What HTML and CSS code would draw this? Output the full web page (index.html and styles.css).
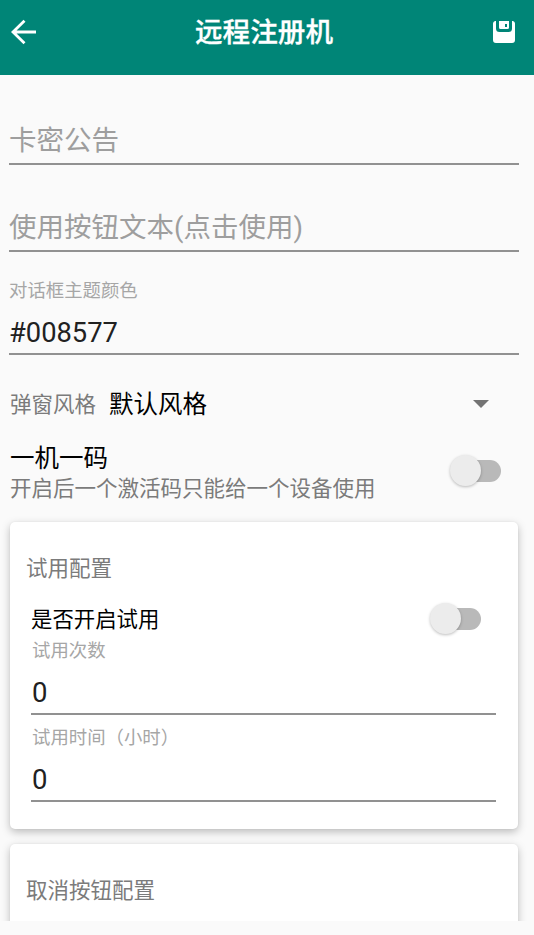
FILE: index.html
```html
<!DOCTYPE html>
<html lang="zh-CN">
<head>
<meta charset="utf-8">
<title>远程注册机</title>
<link rel="stylesheet" href="styles.css">
</head>
<body>
<header class="app-bar">
  <svg class="back" viewBox="0 0 26 26"><path d="M25 13H2M13.5 1.8L2 13L13.5 24.2" fill="none" stroke="#fff" stroke-width="2.8"/></svg>
  <h1 class="title">远程注册机</h1>
  <svg class="save" viewBox="0 0 22 22"><path fill="#fff" d="M2 0H3V7.500Q3 11 6.500 11H15.500Q19 11 19 7.500V0H20Q22 .5 22 2.500V19Q22 22 19 22H3Q0 22 0 19V2.500Q0 .5 2 0Z"/><path fill="#fff" fill-rule="evenodd" d="M6 0H16V6.500Q16 8 14.500 8H7.500Q6 8 6 6.500ZM12 3V6H14V3Z"/></svg>
</header>
<main class="content">
  <div class="field"><div class="value hint">卡密公告</div></div>
  <div class="field"><div class="value hint">使用按钮文本(点击使用)</div></div>
  <div class="field labeled"><div class="label">对话框主题颜色</div><div class="value">#008577</div></div>
  <div class="spinner"><span class="caption">弹窗风格</span><span class="choice">默认风格</span><i class="caret"></i></div>
  <div class="setting">
    <div><div class="choice">一机一码</div><div class="caption">开启后一个激活码只能给一个设备使用</div></div>
    <div class="switch"><i class="thumb"></i></div>
  </div>
  <section class="card">
    <h2 class="caption">试用配置</h2>
    <div class="card-body">
      <div class="toggle"><span>是否开启试用</span><div class="switch"><i class="thumb"></i></div></div>
      <div class="field compact"><div class="label">试用次数</div><div class="value">0</div></div>
      <div class="field compact"><div class="label">试用时间（小时）</div><div class="value">0</div></div>
    </div>
  </section>
  <section class="card">
    <h2 class="caption">取消按钮配置</h2>
  </section>
</main>
</body>
</html>
```
FILE: styles.css
```css
* { box-sizing: border-box; }
body {
  margin: 0;
  height: 935px;
  overflow: hidden;
  background: #fafafa;
  color: #000;
  font-family: Roboto, "Noto Sans CJK SC", sans-serif;
}
h1, h2 { margin: 0; font-weight: 400; }
.app-bar {
  display: flex;
  align-items: center;
  justify-content: space-between;
  height: 75px;
  padding: 0 19px 11px 11px;
  background: #008577;
}
.back { width: 26px; height: 26px; }
.save { width: 22px; height: 22px; }
.title {
  padding: 2px 2px 0 0;
  color: #fff;
  font-size: 27.6px;
  font-weight: 500;
  line-height: 40px;
  -webkit-text-stroke: .3px #fff;
}
.content {
  height: 846px;
  padding-top: 3px;
  overflow: hidden;
}
.field {
  margin: 0 15px 0 9px;
  padding-top: 43px;
  border-bottom: 2px solid #919191;
}
.value {
  height: 42px;
  color: #212121;
  font-size: 27.5px;
  line-height: 40px;
}
.value.hint { color: #9e9e9e; }
.label {
  color: #a6a6a6;
  font-size: 18.4px;
  line-height: 22px;
}
.labeled { padding-top: 28px; }
.labeled .value { height: 40px; margin-top: 11px; font-size: 27.3px; }
.caption {
  color: #7b7b7b;
  font-size: 21.5px;
  line-height: 28px;
}
.choice { font-size: 24.5px; line-height: 32px; }
.spinner {
  display: flex;
  align-items: center;
  height: 50px;
  margin: 24px 45px 0 10px;
}
.spinner span { padding-top: 2px; }
.spinner .choice { margin-left: 13px; }
.caret {
  margin-left: auto;
  border: 8px solid transparent;
  border-top-color: #737373;
  border-bottom: 0;
}
.setting {
  display: flex;
  align-items: center;
  justify-content: space-between;
  height: 60px;
  margin: 13px 33px 0 10px;
}
.setting > :first-child { padding-top: 2px; }
.setting .switch { margin-bottom: 2px; }
.switch {
  position: relative;
  width: 52px;
  height: 22px;
  padding-left: 16px;
}
.switch::before {
  content: "";
  display: block;
  height: 22px;
  border-radius: 11px;
  background: #b9b9b9;
}
.thumb {
  position: absolute;
  left: 1px;
  top: -5px;
  width: 31px;
  height: 31px;
  border-radius: 50%;
  background: #ececec;
  box-shadow: 0 1px 3px rgba(0, 0, 0, .26);
}
.card {
  height: 307px;
  margin: 20px 16px 0 10px;
  padding: 33px 22px 0 16px;
  border-radius: 5px;
  background: #fff;
  box-shadow: 0 3px 8px rgba(0, 0, 0, .25), 0 0 2px rgba(0, 0, 0, .06);
}
.card + .card { margin-top: 15px; }
.card-body { padding-left: 5px; }
.toggle {
  display: flex;
  align-items: center;
  justify-content: space-between;
  height: 40px;
  margin: 16px 15px 1px 0;
  font-size: 21.4px;
}
.toggle span { padding-bottom: 4px; }
.compact { margin: 0; padding-top: 0; }
.compact .value { height: 40px; margin-top: 11px; padding-left: 1px; }
.compact + .compact { padding-top: 12px; }
.compact .label { padding-left: 1px; }
```
